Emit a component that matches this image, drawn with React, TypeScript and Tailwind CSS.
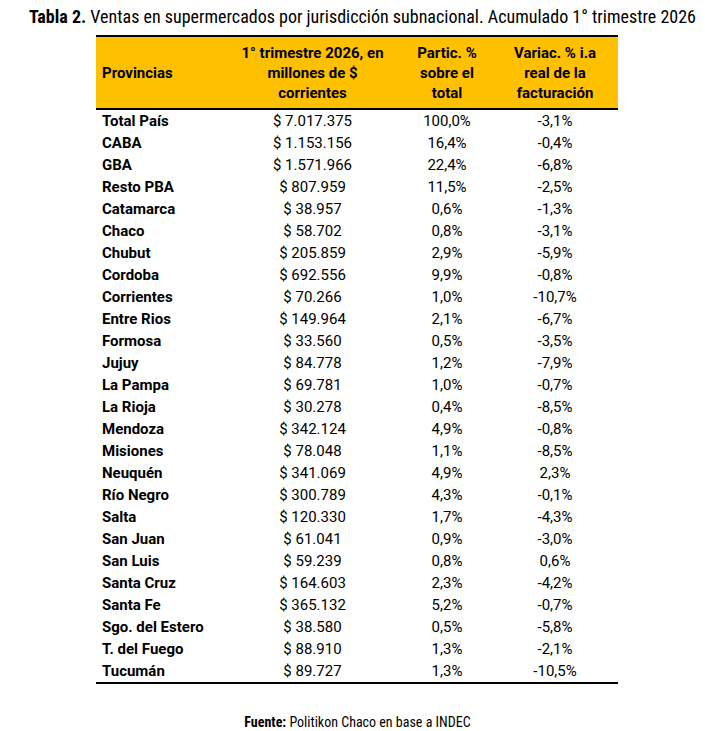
import React from 'react';

const rows: [string, string, string, string][] = [
  ['Total País', '$ 7.017.375', '100,0%', '-3,1%'],
  ['CABA', '$ 1.153.156', '16,4%', '-0,4%'],
  ['GBA', '$ 1.571.966', '22,4%', '-6,8%'],
  ['Resto PBA', '$ 807.959', '11,5%', '-2,5%'],
  ['Catamarca', '$ 38.957', '0,6%', '-1,3%'],
  ['Chaco', '$ 58.702', '0,8%', '-3,1%'],
  ['Chubut', '$ 205.859', '2,9%', '-5,9%'],
  ['Cordoba', '$ 692.556', '9,9%', '-0,8%'],
  ['Corrientes', '$ 70.266', '1,0%', '-10,7%'],
  ['Entre Rios', '$ 149.964', '2,1%', '-6,7%'],
  ['Formosa', '$ 33.560', '0,5%', '-3,5%'],
  ['Jujuy', '$ 84.778', '1,2%', '-7,9%'],
  ['La Pampa', '$ 69.781', '1,0%', '-0,7%'],
  ['La Rioja', '$ 30.278', '0,4%', '-8,5%'],
  ['Mendoza', '$ 342.124', '4,9%', '-0,8%'],
  ['Misiones', '$ 78.048', '1,1%', '-8,5%'],
  ['Neuquén', '$ 341.069', '4,9%', '2,3%'],
  ['Río Negro', '$ 300.789', '4,3%', '-0,1%'],
  ['Salta', '$ 120.330', '1,7%', '-4,3%'],
  ['San Juan', '$ 61.041', '0,9%', '-3,0%'],
  ['San Luis', '$ 59.239', '0,8%', '0,6%'],
  ['Santa Cruz', '$ 164.603', '2,3%', '-4,2%'],
  ['Santa Fe', '$ 365.132', '5,2%', '-0,7%'],
  ['Sgo. del Estero', '$ 38.580', '0,5%', '-5,8%'],
  ['T. del Fuego', '$ 88.910', '1,3%', '-2,1%'],
  ['Tucumán', '$ 89.727', '1,3%', '-10,5%'],
];

export default function App() {
  return (
    <div className="w-[705px] h-[731px] bg-white text-black font-['Roboto_Condensed','Liberation_Sans_Narrow',sans-serif]">
      <h1 className="pt-[5px] pl-[20px] text-center text-[18px] leading-[24px] whitespace-nowrap">
        <span className="font-bold">Tabla 2.</span> Ventas en supermercados por jurisdicción subnacional. Acumulado 1° trimestre 2026
      </h1>

      <table className="mt-[6px] ml-[96px] w-[522px] border-collapse table-fixed text-[15px] font-['Roboto',sans-serif]">
        <colgroup>
          <col className="w-[127px]" />
          <col className="w-[179px]" />
          <col className="w-[90px]" />
          <col className="w-[126px]" />
        </colgroup>
        <thead>
          <tr className="bg-[#ffc000] border-t-2 border-b-2 border-black leading-[20px]">
            <th className="h-[73px] pl-[6px] text-left font-bold">Provincias</th>
            <th className="font-bold text-center">1° trimestre 2026, en<br />millones de $<br />corrientes</th>
            <th className="font-bold text-center">Partic. %<br />sobre el<br />total</th>
            <th className="font-bold text-center">Variac. % i.a<br />real de la<br />facturación</th>
          </tr>
        </thead>
        <tbody className="border-b-2 border-black">
          {rows.map(([prov, monto, part, variac]) => (
            <tr key={prov} className="h-[22px] leading-[22px]">
              <td className="pl-[6px] font-bold whitespace-nowrap">{prov}</td>
              <td className="text-center">{monto}</td>
              <td className="text-center">{part}</td>
              <td className="text-center">{variac}</td>
            </tr>
          ))}
        </tbody>
      </table>

      <p className="mt-[29px] pl-[10px] text-center text-[14px] leading-[18px]">
        <span className="font-bold">Fuente:</span> Politikon Chaco en base a INDEC
      </p>
    </div>
  );
}
